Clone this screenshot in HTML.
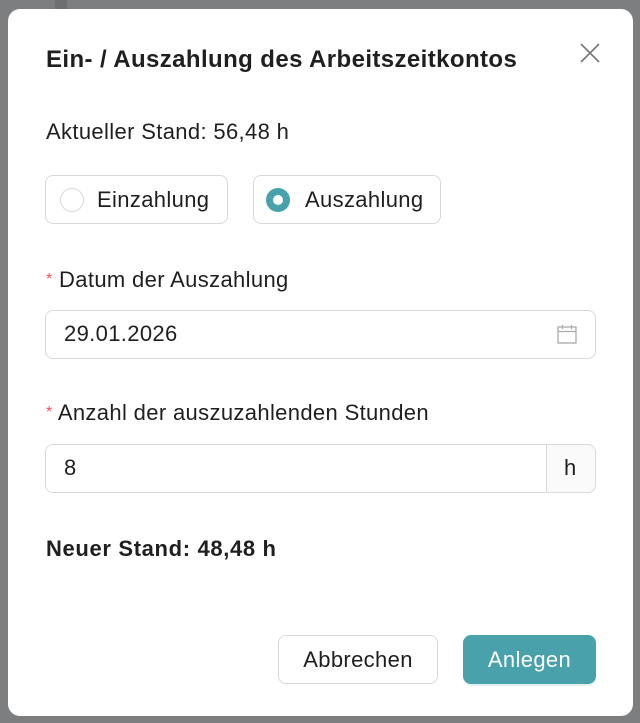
<!DOCTYPE html>
<html><head><meta charset="utf-8"><style>
*{box-sizing:border-box;margin:0;padding:0}
body{width:640px;height:723px;background:#7d7e80;font-family:"Liberation Sans",sans-serif;color:#1f1f1f;position:relative;overflow:hidden}
.bg1{position:absolute;left:55px;top:0;width:12px;height:12px;background:#6e6f71}
.modal{position:absolute;left:8px;top:9px;width:625px;height:707px;background:#fff;border-radius:12px}
.a{position:absolute;white-space:nowrap;line-height:1}
.t{font-size:22px;letter-spacing:0.35px}
.box{position:absolute;border:1px solid #d9d9d9;border-radius:8px;background:#fff}
</style></head><body>
<div class="bg1"></div>
<div class="modal"></div>
<div class="a" style="left:46px;top:48px;font-size:24px;letter-spacing:0.4px;font-weight:bold">Ein- / Auszahlung des Arbeitszeitkontos</div>
<svg class="a" style="left:579px;top:42px" width="22" height="22" viewBox="0 0 22 22"><path d="M2 2L20 20M20 2L2 20" stroke="#777" stroke-width="1.6"/></svg>
<div class="a t" style="left:46px;top:121px">Aktueller Stand: 56,48 h</div>
<div class="box" style="left:45px;top:175px;width:183px;height:49px"></div>
<div class="a" style="left:60px;top:188px;width:24px;height:24px;border:1.5px solid #d9d9d9;border-radius:50%"></div>
<div class="a t" style="left:97px;top:189px">Einzahlung</div>
<div class="box" style="left:253px;top:175px;width:188px;height:49px"></div>
<div class="a" style="left:266px;top:188px;width:24px;height:24px;border:7px solid #48a1ab;border-radius:50%;background:#fff"></div>
<div class="a t" style="left:305px;top:189px">Auszahlung</div>
<div class="a t" style="left:46px;top:269px"><span style="color:#ff4d4f;font-size:16px;position:relative;top:-3px">*</span> Datum der Auszahlung</div>
<div class="box" style="left:45px;top:310px;width:551px;height:49px"></div>
<div class="a t" style="left:64px;top:323px">29.01.2026</div>
<svg class="a" style="left:556px;top:323px" width="22" height="22" viewBox="0 0 22 22" fill="none" stroke="#aaa" stroke-width="1.3"><rect x="2" y="4" width="18" height="16"/><path d="M2 8.5H20M6.5 2V6M15.5 2V6"/></svg>
<div class="a t" style="left:46px;top:402px"><span style="color:#ff4d4f;font-size:16px;position:relative;top:-3px">*</span> Anzahl der auszuzahlenden Stunden</div>
<div class="box" style="left:45px;top:444px;width:551px;height:49px;background:#fafafa"></div>
<div class="a" style="left:46px;top:445px;width:501px;height:47px;background:#fff;border-right:1px solid #d9d9d9;border-radius:7px 0 0 7px"></div>
<div class="a t" style="left:64px;top:457px">8</div>
<div class="a t" style="left:564px;top:457px">h</div>
<div class="a" style="left:46px;top:538px;font-size:22px;letter-spacing:0.65px;font-weight:bold">Neuer Stand: 48,48 h</div>
<div class="box" style="left:278px;top:635px;width:160px;height:49px"></div>
<div class="a t" style="left:278px;top:649px;width:160px;text-align:center">Abbrechen</div>
<div class="a" style="left:463px;top:635px;width:133px;height:49px;background:#48a1ab;border-radius:8px;box-shadow:0 2px 0 rgba(72,161,171,0.15)"></div>
<div class="a t" style="left:463px;top:649px;width:133px;text-align:center;color:#fff">Anlegen</div>
</body></html>
